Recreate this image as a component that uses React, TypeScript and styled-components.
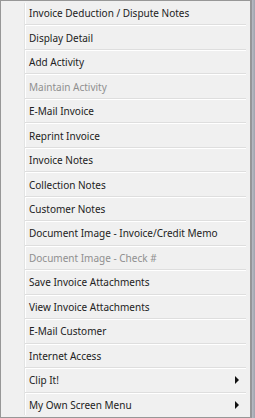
import React from "react";
import styled, { createGlobalStyle } from "styled-components";

const GlobalStyle = createGlobalStyle`
  html, body {
    margin: 0;
    padding: 0;
    background: #8a8f98;
  }
  body {
    width: 255px;
    height: 418px;
    overflow: hidden;
  }
`;

interface MenuEntry {
  label: string;
  disabled?: boolean;
  submenu?: boolean;
}

const entries: MenuEntry[] = [
  { label: "Invoice Deduction / Dispute Notes" },
  { label: "Display Detail" },
  { label: "Add Activity" },
  { label: "Maintain Activity", disabled: true },
  { label: "E-Mail Invoice" },
  { label: "Reprint Invoice" },
  { label: "Invoice Notes" },
  { label: "Collection Notes" },
  { label: "Customer Notes" },
  { label: "Document Image - Invoice/Credit Memo" },
  { label: "Document Image - Check #", disabled: true },
  { label: "Save Invoice Attachments" },
  { label: "View Invoice Attachments" },
  { label: "E-Mail Customer" },
  { label: "Internet Access" },
  { label: "Clip It!", submenu: true },
  { label: "My Own Screen Menu", submenu: true },
];

const Frame = styled.div`
  display: flex;
  width: 255px;
  height: 418px;
`;

const Menu = styled.div`
  position: relative;
  display: flex;
  flex-direction: column;
  width: 251px;
  height: 418px;
  box-sizing: border-box;
  border: 1px solid #979797;
  padding: 0 2px;
  background: #f0f0f0;
  font-family: "Noto Sans", "Open Sans", sans-serif;
  font-size: 10px;
`;

const Gutter = styled.div`
  position: absolute;
  top: 2px;
  bottom: 2px;
  left: 23px;
  width: 1px;
  background: #e2e3e3;
  box-shadow: 1px 0 0 #ffffff;
`;

const Item = styled.div<{ $disabled?: boolean; $last?: boolean }>`
  flex: 1;
  display: flex;
  align-items: center;
  justify-content: space-between;
  padding-left: 26px;
  padding-right: 9px;
  color: ${({ $disabled }) => ($disabled ? "#8f8f8f" : "#222222")};
  white-space: nowrap;
  position: relative;
  &::after {
    content: "";
    display: ${({ $last }) => ($last ? "none" : "block")};
    position: absolute;
    left: 22px;
    right: 2px;
    bottom: 0;
    height: 1px;
    background: #dedede;
    box-shadow: 0 1px 0 #ffffff;
  }
`;

const Arrow = styled.span`
  width: 0;
  height: 0;
  border-top: 4px solid transparent;
  border-bottom: 4px solid transparent;
  border-left: 4px solid #111;
`;

const Edge = styled.div`
  width: 4px;
  height: 418px;
  background: linear-gradient(90deg, #6f6f6f 0, #b9bcc4 1px, #9ea3ad 100%);
`;

export default function App() {
  return (
    <Frame>
      <GlobalStyle />
      <Menu>
        <Gutter />
        {entries.map((e, i) => (
          <Item key={e.label} $disabled={e.disabled} $last={i === entries.length - 1}>
            <span>{e.label}</span>
            {e.submenu && <Arrow />}
          </Item>
        ))}
      </Menu>
      <Edge />
    </Frame>
  );
}
